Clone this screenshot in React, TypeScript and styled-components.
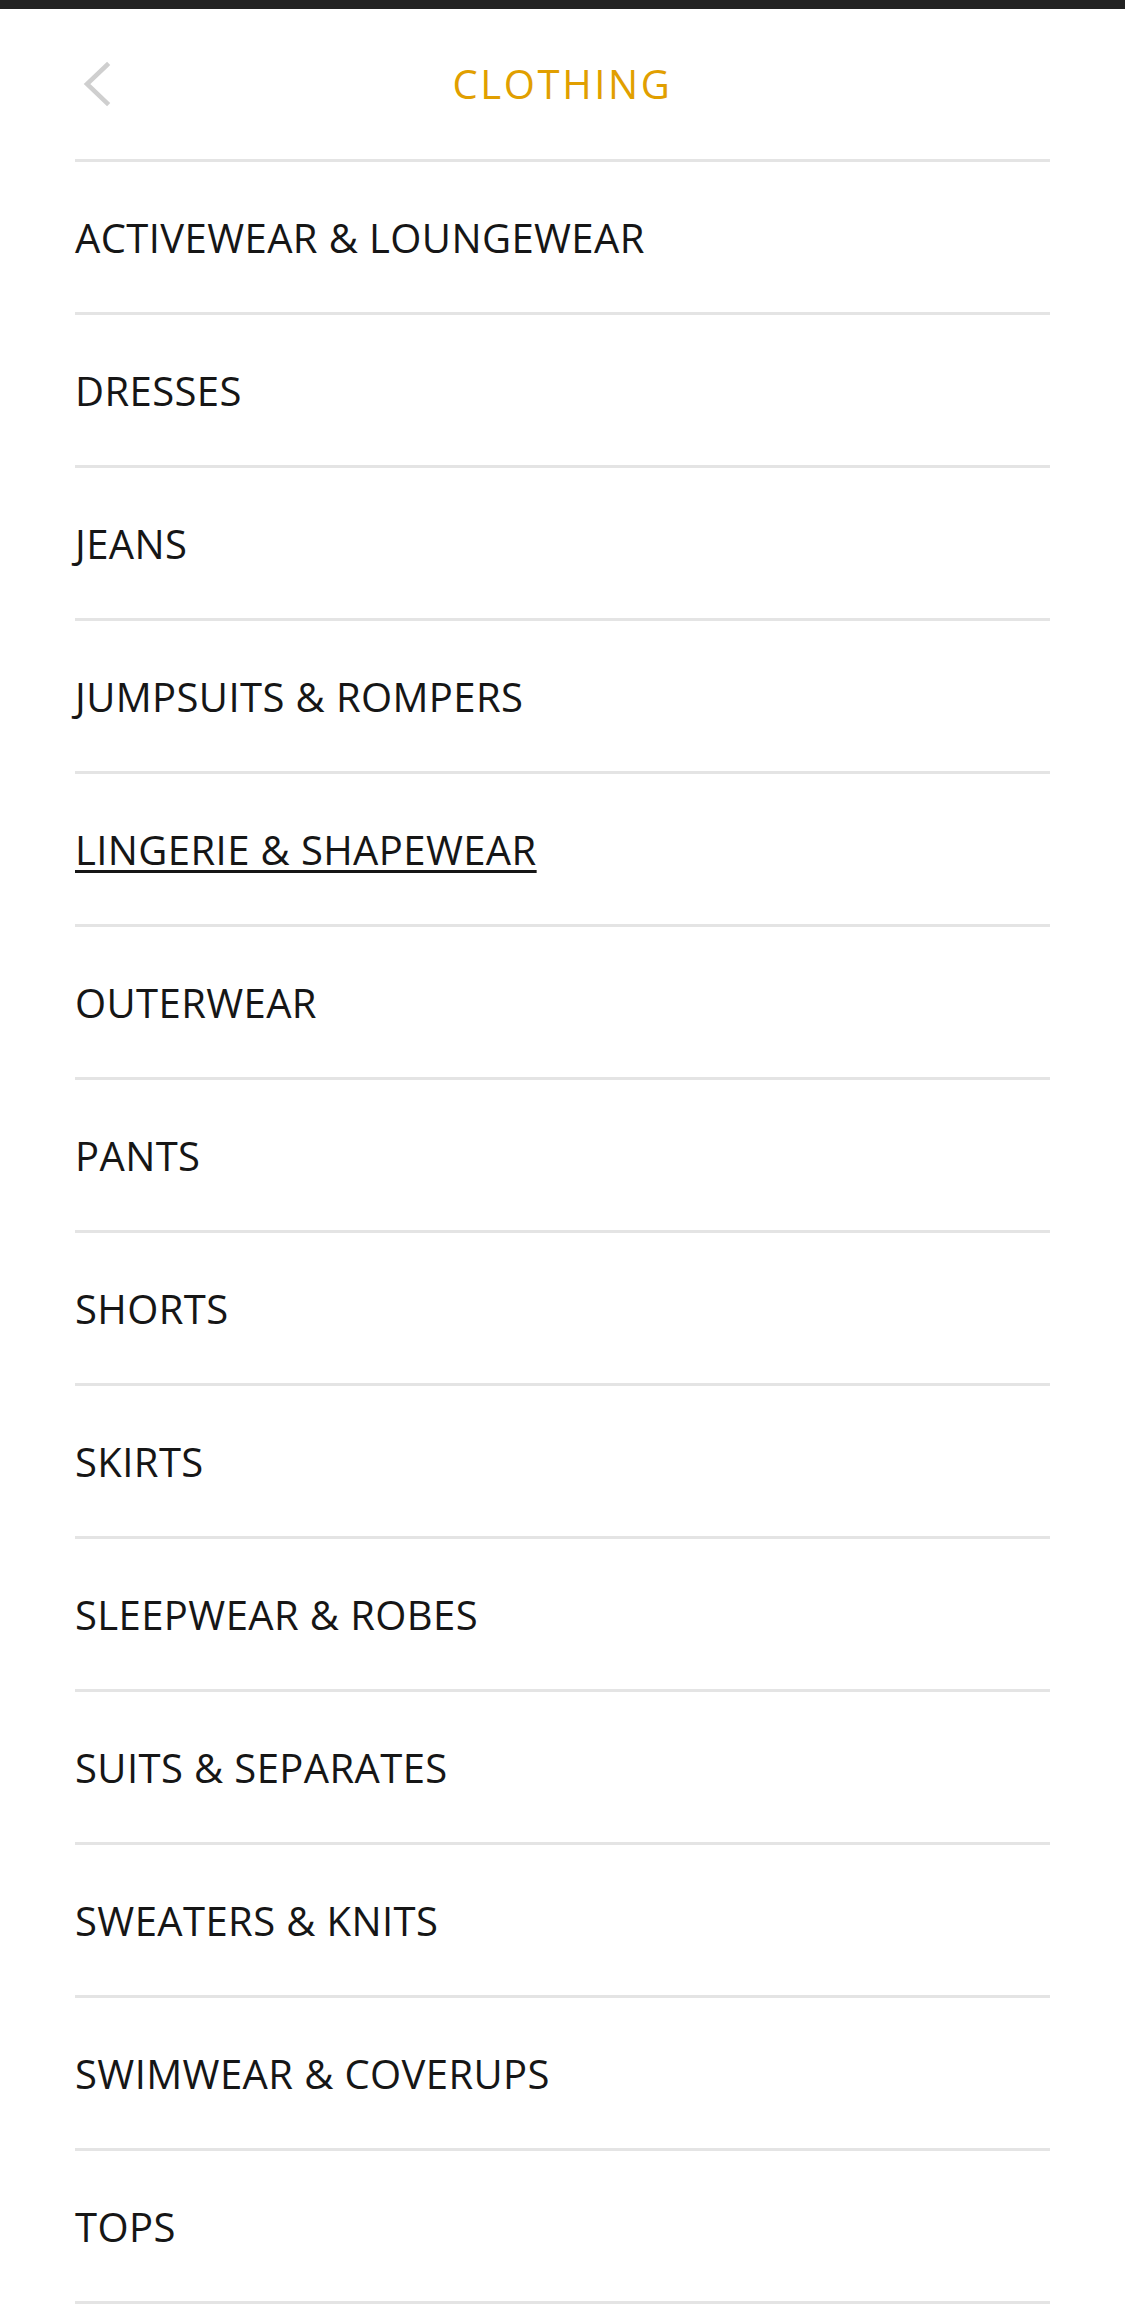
import React from 'react';
import styled, { createGlobalStyle } from 'styled-components';

const GlobalStyle = createGlobalStyle`
    html, body {
        margin: 0;
        padding: 0;
        background: #fff;
    }
    body {
        font-family: "Open Sans", "Liberation Sans", sans-serif;
        -webkit-font-smoothing: antialiased;
    }
`;

const categories = [
    'ACTIVEWEAR & LOUNGEWEAR',
    'DRESSES',
    'JEANS',
    'JUMPSUITS & ROMPERS',
    'LINGERIE & SHAPEWEAR',
    'OUTERWEAR',
    'PANTS',
    'SHORTS',
    'SKIRTS',
    'SLEEPWEAR & ROBES',
    'SUITS & SEPARATES',
    'SWEATERS & KNITS',
    'SWIMWEAR & COVERUPS',
    'TOPS',
];

const Screen = styled.div`
    width: 1125px;
    min-height: 2304px;
    display: flex;
    flex-direction: column;
    background: #fff;
`;

const StatusStrip = styled.div`
    height: 9px;
    background: #222;
`;

const Header = styled.header`
    height: 150px;
    margin: 0 75px;
    display: grid;
    grid-template-columns: 120px 1fr 120px;
    align-items: center;
`;

const BackButton = styled.button`
    width: 50px;
    height: 50px;
    padding: 0;
    margin-left: 8px;
    border: 0;
    background: none;
    display: flex;
    align-items: center;
    justify-content: flex-start;
    cursor: pointer;
`;

const Title = styled.h1`
    margin: 0;
    text-align: center;
    font-size: 40px;
    font-weight: 400;
    letter-spacing: 2.6px;
    color: #e19f00;
    line-height: 1;
`;

const List = styled.ul`
    list-style: none;
    margin: 0 75px;
    padding: 0;
    border-bottom: 3px solid #e4e4e4;
`;

const Row = styled.li`
    height: 150px;
    border-top: 3px solid #e4e4e4;
    display: flex;
    align-items: center;
`;

const RowLink = styled.a<{ $active?: boolean }>`
    font-size: 40px;
    font-weight: 400;
    letter-spacing: 0.4px;
    color: #161616;
    text-decoration: ${(props) => props.$active ? 'underline' : 'none'};
    text-decoration-thickness: 3px;
    text-underline-offset: 5px;
    cursor: pointer;
`;

const BottomStrip = styled.div`
    height: 1px;
    background: #222;
`;

const ChevronLeft = () => (
    <svg width="30" height="46" viewBox="0 0 30 46">
        <path d="M24 4 L4 23 L24 42" fill="none" stroke="#cfcfcf" strokeWidth="4.5" strokeLinecap="square" />
    </svg>
);

const App = () => {
    return (
        <>
            <GlobalStyle />
            <Screen>
                <StatusStrip />
                <Header>
                    <BackButton aria-label="Back">
                        <ChevronLeft />
                    </BackButton>
                    <Title>CLOTHING</Title>
                    <div />
                </Header>
                <List>
                    {categories.map((name) => (
                        <Row key={name}>
                            <RowLink $active={name === 'LINGERIE & SHAPEWEAR'}>{name}</RowLink>
                        </Row>
                    ))}
                </List>
                <BottomStrip />
            </Screen>
        </>
    );
};

export default App;
